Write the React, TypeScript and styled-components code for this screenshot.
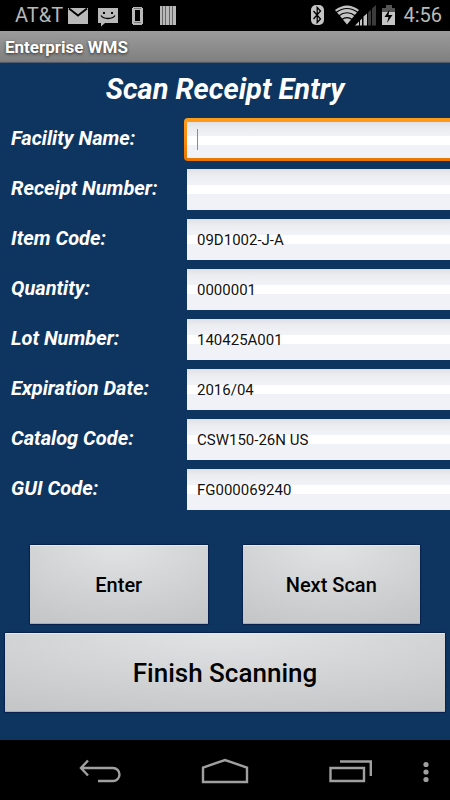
import React from 'react';
import styled, { createGlobalStyle, css } from 'styled-components';

const GlobalStyle = createGlobalStyle`
  * { box-sizing: border-box; }
  body {
    margin: 0;
    background: #000;
    font-family: Roboto, "Liberation Sans", sans-serif;
  }
  button, input { font-family: inherit; margin: 0; }
`;

const Screen = styled.div`
  display: flex;
  flex-direction: column;
  min-height: 100vh;
  overflow: hidden;
  background: #000;
`;

const StatusBar = styled.div`
  display: flex;
  align-items: center;
  justify-content: space-between;
  height: 31px;
  padding: 0 8px 0 15px;
  color: #b9b9b9;
  font-size: 20px;
  line-height: 33px;
`;

const StatusGroup = styled.div`
  display: flex;
  align-items: center;
  height: 31px;
  svg { display: block; }
`;

const Carrier = styled.span`
  width: 53px;
  white-space: nowrap;
`;

const Clock = styled.time`
  margin-left: 7px;
`;

const TitleBar = styled.header`
  height: 32px;
  padding: 0 5px;
  background: linear-gradient(#9c9c9c, #808080 30px, #737373 31px, #2b4668);
  color: #fff;
  font-size: 17px;
  font-weight: 700;
  line-height: 32px;
  text-shadow: 0 1px 3px rgba(0, 0, 0, 0.7);
`;

const Content = styled.main`
  flex: 1;
  display: flex;
  flex-direction: column;
  background: #0e355f;
`;

const Heading = styled.h1`
  margin: 0;
  height: 51px;
  color: #fff;
  font-size: 29px;
  font-style: italic;
  font-weight: 700;
  line-height: 52px;
  text-align: center;
`;

const Row = styled.div`
  display: grid;
  grid-template-columns: 187px 1fr;
  height: 50px;
  padding-top: 5px;
`;

const Label = styled.label`
  padding-left: 11px;
  color: #fff;
  font-size: 20px;
  font-style: italic;
  font-weight: 700;
  line-height: 38px;
  white-space: nowrap;
`;

const FieldFrame = styled.div<{ $active?: boolean }>`
  position: relative;
  height: 41px;
  ${({ $active }) =>
    $active &&
    css`
      height: 43px;
      margin: -1px 0 0 -3px;
      padding: 4px 0 3px 3px;
      border-radius: 4px 0 0 4px;
      background: linear-gradient(#ff9c1c, #f98a10 50%, #e87500);
    `}
`;

const Field = styled.input`
  display: block;
  width: 100%;
  height: 100%;
  padding: 0 10px;
  border: 0;
  border-radius: 0;
  outline: 0;
  background:
    linear-gradient(#fff, #fff) center / 100% 9px no-repeat,
    linear-gradient(#dfe1e6, #ebecf0 6px, #f1f2f7 14px);
  color: #111;
  font-size: 15px;
`;

const Caret = styled.span`
  position: absolute;
  top: 11px;
  left: 13px;
  width: 1px;
  height: 21px;
  background: #8c8c8c;
`;

const ButtonRow = styled.div`
  display: grid;
  grid-template-columns: 1fr 1fr;
  gap: 35px;
  margin-top: 31px;
  padding: 0 30px;
`;

const FinishRow = styled.div`
  display: grid;
  padding: 9px 5px 28px;
`;

const ActionButton = styled.button<{ $large?: boolean }>`
  height: 79px;
  padding: 0;
  border: 0;
  border-radius: 1px;
  background: radial-gradient(ellipse 90% 110% at 50% 0, #e2e3e5, #d2d3d5 55%, #c5c6c8);
  box-shadow:
    inset 0 1px #e9eaec,
    inset 0 -1px #aaabad,
    0 0 1px 1px #08204f;
  color: #000;
  font-size: ${({ $large }) => ($large ? 26 : 20)}px;
  font-weight: 500;
  cursor: pointer;
`;

const NavBar = styled.nav`
  display: grid;
  grid-template-columns: 37px 1fr 1fr 1fr 37px;
  align-items: center;
  height: 60px;
  background: #000;
`;

const NavButton = styled.button`
  display: grid;
  place-items: center;
  height: 60px;
  padding: 2px 0 0;
  border: 0;
  background: transparent;
  color: #a0a0a0;
  cursor: pointer;
  svg { display: block; }
`;

const MenuButton = styled(NavButton)`
  grid-column: 5;
  padding: 4px 12px 0 0;
`;

const BackButton = styled(NavButton)`
  grid-column: 2;
`;

const NotificationIcons = () => (
  <svg width="110" height="31" viewBox="68 0 110 31" fill="#b9b9b9" aria-hidden="true">
    <path d="M68 8h20v16H68z" />
    <path d="M69 8.5l9 7 9-7" fill="none" stroke="#000" strokeWidth="1.8" />
    <path d="M98 8h20v15h-13l-4 3.5v-3.5h-3z" />
    <path d="M103 12h2v2h-2zM111 12h2v2h-2z" fill="#000" />
    <path d="M101 15.5q2 3 7 3t7-3" fill="none" stroke="#000" strokeWidth="1.3" />
    <path d="M133 7h9v1h1v16h-1v1h-9v-1h-1V8h1z" />
    <path d="M135 10h5v11h-5z" fill="#000" />
    <path d="M134 8.500h7M134 22.500h7" stroke="#777" />
    <path d="M160 6h16v19h-16z" />
    <path d="M162.500 6v19M165.500 6v19M169.500 6v19M172.500 6v19" stroke="#666" />
  </svg>
);

const SystemIcons = () => (
  <svg width="86" height="31" viewBox="311 0 86 31" fill="#c4c4c4" aria-hidden="true">
    <rect x="312" y="5" width="13" height="20" rx="5" />
    <path d="M314.500 11l7 8-3.300 3.500v-15l3.300 3.500-7 8" fill="none" stroke="#000" strokeWidth="1.3" />
    <path d="M336 10q12-9 24 0L348 24.500z" />
    <g fill="none" stroke="#000" strokeWidth="1.200">
      <path d="M337 12.500q11-8 22 0" />
      <path d="M339.500 16q8.500-6.500 17 0" />
      <path d="M342.500 19.700q5.500-4 11 0" />
    </g>
    <path d="M355 26l22-21v21z" fill="#000" />
    <path d="M356 25.500l4-4v4zM361 25.500v-5l2-2v7zM364.500 25.500v-9l3.500-3v12z" />
    <path d="M369 25.500v-13l3-3v16zM373 25.500V8.500l4-3.500v20.500z" fill="#3b3b3b" />
    <path d="M383 8h4V5h6v3h3v5h-13z" fill="#555" />
    <path d="M383 12h13v13h-13z" />
    <path d="M390.500 9.500l-5 7.500h4l-1.500 6 5.500-8h-4z" fill="#000" />
  </svg>
);

const BackIcon = () => (
  <svg width="43" height="24" viewBox="0 0 43 24" fill="none" stroke="currentColor" strokeWidth="2.400" aria-hidden="true">
    <path d="M10 1.500L3 9l7 7.500M3 9h32a6.500 6.500 0 0 1 0 13H20" />
  </svg>
);

const HomeIcon = () => (
  <svg width="48" height="26" viewBox="0 0 48 26" fill="none" stroke="currentColor" strokeWidth="2.400" aria-hidden="true">
    <path d="M2 24V9.500L24 2l22 7.500V24z" />
  </svg>
);

const RecentIcon = () => (
  <svg width="44" height="24" viewBox="0 0 44 24" fill="none" stroke="currentColor" strokeWidth="2.400" aria-hidden="true">
    <path d="M2.500 9h33.500v13h-33.500z" />
    <path d="M12 2.500h30.800V17" />
  </svg>
);

const MenuIcon = () => (
  <svg width="6" height="22" viewBox="0 0 6 22" fill="currentColor" aria-hidden="true">
    <circle cx="3" cy="3.500" r="2.600" />
    <circle cx="3" cy="11" r="2.600" />
    <circle cx="3" cy="18.500" r="2.600" />
  </svg>
);

const fields = [
  { id: 'facility', label: 'Facility Name:', value: '', active: true },
  { id: 'receipt', label: 'Receipt Number:', value: '' },
  { id: 'item', label: 'Item Code:', value: '09D1002-J-A' },
  { id: 'quantity', label: 'Quantity:', value: '0000001' },
  { id: 'lot', label: 'Lot Number:', value: '140425A001' },
  { id: 'expiration', label: 'Expiration Date:', value: '2016/04' },
  { id: 'catalog', label: 'Catalog Code:', value: 'CSW150-26N US' },
  { id: 'gui', label: 'GUI Code:', value: 'FG000069240' },
];

export default function App() {
  return (
    <>
      <GlobalStyle />
      <Screen>
        <StatusBar>
          <StatusGroup>
            <Carrier>AT&amp;T</Carrier>
            <NotificationIcons />
          </StatusGroup>
          <StatusGroup>
            <SystemIcons />
            <Clock>4:56</Clock>
          </StatusGroup>
        </StatusBar>
        <TitleBar>Enterprise WMS</TitleBar>
        <Content>
          <Heading>Scan Receipt Entry</Heading>
          {fields.map(({ id, label, value, active }) => (
            <Row key={id}>
              <Label htmlFor={id}>{label}</Label>
              <FieldFrame $active={active}>
                <Field id={id} type="text" defaultValue={value} />
                {active && <Caret />}
              </FieldFrame>
            </Row>
          ))}
          <ButtonRow>
            <ActionButton type="button">Enter</ActionButton>
            <ActionButton type="button">Next Scan</ActionButton>
          </ButtonRow>
          <FinishRow>
            <ActionButton type="button" $large>Finish Scanning</ActionButton>
          </FinishRow>
        </Content>
        <NavBar>
          <BackButton type="button" aria-label="Back"><BackIcon /></BackButton>
          <NavButton type="button" aria-label="Home"><HomeIcon /></NavButton>
          <NavButton type="button" aria-label="Recent apps"><RecentIcon /></NavButton>
          <MenuButton type="button" aria-label="Menu"><MenuIcon /></MenuButton>
        </NavBar>
      </Screen>
    </>
  );
}
